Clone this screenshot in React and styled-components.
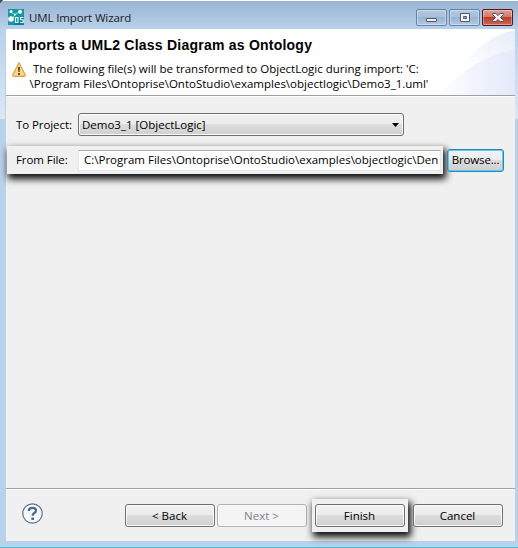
import React from "react";
import styled, { createGlobalStyle, css } from "styled-components";

const Global = createGlobalStyle`
  * { box-sizing: border-box; }
  body { margin: 0; background: #b9d1ea; }
`;

const Window = styled.div`
  width: 518px;
  height: 548px;
  display: flex;
  flex-direction: column;
  padding: 1px 3px 6px 6px;
  border-bottom: 1px solid #30c5e3;
  background:
    linear-gradient(135deg, #4a4f57 0 2px, transparent 2.5px) 0 0 / 4px 4px no-repeat,
    linear-gradient(#fbfcfd, #fbfcfd) 0 0 / 100% 1px no-repeat,
    linear-gradient(#98b4d2, #b9d1ea) 0 1px / 100% 28px no-repeat,
    linear-gradient(#b9d1ea, #dbe8f6) 0 29px / 5px 90px no-repeat,
    linear-gradient(#b9d1ea, #dbe8f6) 100% 29px / 3px 90px no-repeat,
    #b9d1ea;
  font: 11.5px/15px "Open Sans", "Noto Sans", sans-serif;
  color: #000;
  overflow: hidden;
`;

const TitleBar = styled.header`
  height: 28px;
  flex: none;
  display: flex;
  align-items: flex-start;
  padding-left: 2px;
`;

const AppIcon = styled.svg`
  display: block;
  width: 16px;
  height: 16px;
  margin-top: 8px;
`;

const Caption = styled.div`
  margin: 9px 0 0 5px;
  flex: 1;
  color: #151c26;
  letter-spacing: -0.13px;
  white-space: nowrap;
`;

const Controls = styled.div`
  display: flex;
  gap: 2px;
  margin: 8px 2px 0 0;
`;

const Control = styled.button`
  width: 31px;
  height: 17px;
  padding: 0;
  border: 1px solid ${(p) => (p.$close ? "#4d1620" : "#6a829f")};
  border-radius: 2px;
  background: ${(p) =>
    p.$close
      ? "linear-gradient(#dfa093 0%, #d4796a 45%, #bd3b28 50%, #cf6955 100%)"
      : "linear-gradient(#b0c7df 0%, #a6c0db 45%, #97b4d2 50%, #b0cae4 100%)"};
  box-shadow: inset 0 0 0 1px rgba(255, 255, 255, 0.35);
  svg { display: block; }
`;

const Client = styled.main`
  flex: 1;
  display: flex;
  flex-direction: column;
  background: #f0f0f0;
`;

const Banner = styled.section`
  position: relative;
  height: 67px;
  flex: none;
  background: #fff;
  border-bottom: 1px solid #a0a0a0;
  box-shadow: 0 1px #fff;
`;

const Swoosh = styled.svg`
  position: absolute;
  right: 0;
  top: 0;
  width: 90px;
  height: 66px;
`;

const Heading = styled.h1`
  position: relative;
  margin: 0;
  padding: 8px 0 0 6px;
  font: bold 14px/16px "Liberation Sans", Arial, sans-serif;
  letter-spacing: 0.23px;
  white-space: nowrap;
`;

const Message = styled.div`
  position: relative;
  display: flex;
  margin: 8px 0 0 6px;
`;

const WarnIcon = styled.svg`
  display: block;
  width: 14px;
  height: 16px;
  flex: none;
`;

const MessageText = styled.p`
  margin: 0 0 0 4px;
  text-indent: 3px;
  white-space: nowrap;
  span { display: block; text-indent: 0; margin-left: -0.5px; }
`;

const Form = styled.section`
  flex: 1;
  padding-top: 17px;
`;

const Line = styled.div`
  display: flex;
  align-items: center;
  height: 23px;
  padding-left: 10px;
`;

const Label = styled.label`
  width: 62px;
  flex: none;
  padding-bottom: ${(p) => (p.$raised ? 2 : 0)}px;
  letter-spacing: -0.08px;
  white-space: nowrap;
`;

const raised = css`
  border: 1px solid #707070;
  border-radius: 3px;
  background: linear-gradient(#f2f2f2 0%, #ebebeb 49%, #dddddd 50%, #cfcfcf 100%);
  box-shadow: inset 0 0 0 1px #fafafa;
`;

const Combo = styled.div`
  ${raised}
  width: 326px;
  height: 23px;
  display: flex;
  align-items: center;
  justify-content: space-between;
  padding: 0 4px 0 3px;
  svg { display: block; }
`;

const FileLine = styled.div`
  display: flex;
  align-items: center;
  gap: 4px;
  height: 28px;
  margin-top: 10px;
  padding-left: 1px;
`;

const Spotlight = styled.div`
  display: flex;
  align-items: center;
  flex: none;
  background: #f0f0f0;
  box-shadow: 2px 4px 7px 1px rgba(0, 0, 0, 0.95);
`;

const FileSpotlight = styled(Spotlight)`
  width: 436px;
  height: 28px;
  padding-left: 9px;
`;

const FileField = styled.div`
  width: 363px;
  height: 21px;
  padding: 1px 1px 0 5px;
  border: 1px solid #e3e6ec;
  border-top-color: #abadb3;
  background: #fff;
`;

const FieldValue = styled.div`
  width: 354px;
  white-space: nowrap;
  overflow: hidden;
`;

const Button = styled.button`
  ${raised}
  width: ${(p) => p.$width || 90}px;
  height: 23px;
  flex: none;
  padding: 1px 1px 0 0;
  font: inherit;
  color: #000;
  ${(p) =>
    p.$focused &&
    css`
      position: relative;
      padding: 0 0 1px;
      letter-spacing: -0.15px;
      border-color: #3c7fb1;
      box-shadow: inset 0 0 0 1px #48d4f6;
    `}
  ${(p) =>
    p.disabled &&
    css`
      border-color: #adb2b5;
      background: #f4f4f4;
      color: #838383;
    `}
`;

const Footer = styled.footer`
  height: 53px;
  flex: none;
  display: flex;
  align-items: center;
  border-top: 1px solid #a0a0a0;
  box-shadow: inset 0 1px #fff;
  padding: 0 12px 0 16px;
`;

const HelpIcon = styled.svg`
  display: block;
  width: 21px;
  height: 21px;
  margin: -3px auto 0 0;
`;

const Actions = styled.div`
  display: flex;
  align-items: center;
  gap: 2px;
`;

const FinishSpotlight = styled(Spotlight)`
  width: 96px;
  height: 33px;
  margin: 0 -1px 0 3px;
  justify-content: center;
  & + button { margin-left: 4px; }
`;

export default function App() {
  return (
    <>
      <Global />
      <Window>
        <TitleBar>
          <AppIcon viewBox="0 0 16 16">
            <rect width="16" height="16" fill="#087f91" />
            <path d="M0 0h16v7L5 16H0z" fill="#1298a8" />
            <path d="M3 3l4 3 5-4M7 6l-4 5" stroke="#9de0e6" fill="none" />
            <circle cx="3" cy="2.5" r="1.5" fill="#fff" />
            <circle cx="12" cy="2.7" r="2" fill="#fff" />
            <circle cx="7" cy="5.5" r="1" fill="#fff" />
            <circle cx="3" cy="10" r="2.8" fill="#fff" />
            <path d="M7.500 8.500h2.500v5h-2.500zM15.500 8.500h-3v2.200h2.700v2.800h-3" fill="none" stroke="#e9fcfd" strokeWidth="1.1" />
          </AppIcon>
          <Caption>UML Import Wizard</Caption>
          <Controls>
            <Control aria-label="Minimize">
              <svg width="29" height="15">
                <rect x="9.5" y="8.5" width="10" height="3" rx="0.5" fill="#efefef" stroke="#535666" />
              </svg>
            </Control>
            <Control aria-label="Maximize">
              <svg width="29" height="15">
                <path fillRule="evenodd" d="M10.500 3.500h9v8h-9zM13.500 6.500h3v2h-3z" fill="#f5f5f5" stroke="#535666" />
              </svg>
            </Control>
            <Control $close aria-label="Close">
              <svg width="29" height="15">
                <path d="M9.500 3.500h3.400l2.100 2 2.100-2h3.400v1l-3 3 3 3v1h-3.400l-2.100-2-2.100 2H9.500v-1l3-3-3-3z" fill="#f5f5f5" stroke="#535666" />
              </svg>
            </Control>
          </Controls>
        </TitleBar>
        <Client>
          <Banner>
            <Swoosh viewBox="0 0 90 66">
              <defs>
                <linearGradient id="outer" x1="0" y1="1" x2="1" y2="0">
                  <stop offset="0.35" stopColor="#fff" />
                  <stop offset="1" stopColor="#e6ecf9" />
                </linearGradient>
                <linearGradient id="inner" x1="0" y1="0" x2="1" y2="0">
                  <stop offset="0" stopColor="#fdfeff" />
                  <stop offset="1" stopColor="#e3e9f8" />
                </linearGradient>
              </defs>
              <path d="M18 66C36 32 62 6 90 1V66z" fill="url(#outer)" />
              <path d="M14 66C36 42 62 25 90 21V66z" fill="url(#inner)" />
            </Swoosh>
            <Heading>Imports a UML2 Class Diagram as Ontology</Heading>
            <Message>
              <WarnIcon viewBox="0 0 14 16">
                <path d="M7 1.600L13.400 13.800q.3 1.600-1 1.600H1.600Q.3 15.400.6 13.800z" fill="#f8c66a" stroke="#d59b45" />
                <path d="M7 4L12 14H2z" fill="#fbd990" />
                <path d="M6 6h2l-.3 5H6.300z" fill="#5e4220" />
                <rect x="6" y="12" width="2" height="1.800" fill="#5e4220" />
              </WarnIcon>
              <MessageText>
                The following file(s) will be transformed to ObjectLogic during import: &apos;C:
                <span>\Program Files\Ontoprise\OntoStudio\examples\objectlogic\Demo3_1.uml&apos;</span>
              </MessageText>
            </Message>
          </Banner>
          <Form>
            <Line>
              <Label>To Project:</Label>
              <Combo>
                Demo3_1 [ObjectLogic]
                <svg width="7" height="4"><path d="M0 0h7L3.500 4z" /></svg>
              </Combo>
            </Line>
            <FileLine>
              <FileSpotlight>
                <Label $raised>From File:</Label>
                <FileField>
                  <FieldValue>C:\Program Files\Ontoprise\OntoStudio\examples\objectlogic\Den</FieldValue>
                </FileField>
              </FileSpotlight>
              <Button $width={57} $focused>Browse...</Button>
            </FileLine>
          </Form>
          <Footer>
            <HelpIcon viewBox="0 0 21 21">
              <circle cx="10.500" cy="10.500" r="9.700" fill="#f5f7fa" stroke="#61708f" strokeWidth="1.200" />
              <path d="M6.800 8Q6.800 4.800 10.400 4.800Q14 4.800 14 7.600Q14 9.200 12 10.300Q10.700 11.100 10.700 12.800" fill="none" stroke="#53688f" strokeWidth="2.300" />
              <rect x="9.400" y="14.500" width="2.600" height="2.500" fill="#53688f" />
            </HelpIcon>
            <Actions>
              <Button>&lt; Back</Button>
              <Button disabled>Next &gt;</Button>
              <FinishSpotlight>
                <Button>Finish</Button>
              </FinishSpotlight>
              <Button>Cancel</Button>
            </Actions>
          </Footer>
        </Client>
      </Window>
    </>
  );
}
